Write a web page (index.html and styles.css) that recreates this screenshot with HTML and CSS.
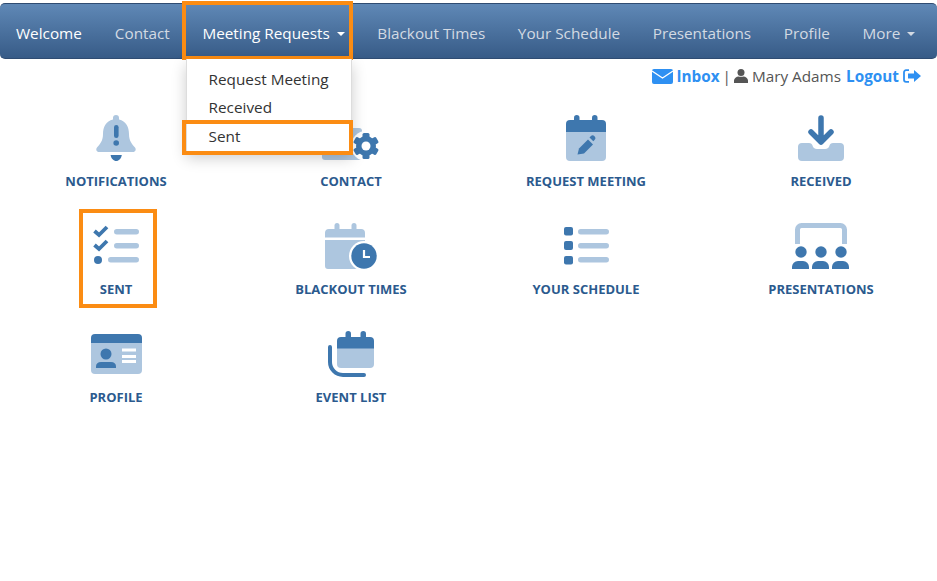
FILE: index.html
```html
<!DOCTYPE html>
<html lang="en">
<head>
<meta charset="utf-8">
<title>Meeting Requests</title>
<link rel="stylesheet" href="styles.css">
</head>
<body>
<nav class="navbar">
  <a class="nav-item active" href="#">Welcome</a>
  <a class="nav-item" href="#">Contact</a>
  <div class="nav-item active open">
    <span>Meeting Requests</span><span class="caret"></span>
    <ul class="dropdown">
      <li>Request Meeting</li>
      <li>Received</li>
      <li class="marked">Sent</li>
    </ul>
  </div>
  <a class="nav-item" href="#">Blackout Times</a>
  <a class="nav-item" href="#">Your Schedule</a>
  <a class="nav-item" href="#">Presentations</a>
  <a class="nav-item" href="#">Profile</a>
  <div class="nav-item"><span>More</span><span class="caret"></span></div>
</nav>

<div class="userbar">
  <svg class="ic-mail" viewBox="0 0 21 15"><rect width="21" height="15" rx="2" fill="#2e90f2"/><path d="M0 2 L10.500 9 L21 2" fill="none" stroke="#fff" stroke-width="1.300"/></svg>
  <a class="link" href="#">Inbox</a>
  <span class="sep">|</span>
  <svg class="ic-user" viewBox="0 0 14 14"><circle cx="7" cy="3.600" r="3.500" fill="#555"/><path d="M0 14v-2.500C0 9 2.500 7.600 4.500 7.400 5.500 8 8.500 8 9.500 7.400 11.500 7.600 14 9 14 11.500V14z" fill="#555"/></svg>
  <span class="name">Mary Adams</span>
  <a class="link" href="#">Logout</a>
  <svg class="ic-logout" viewBox="0 0 18 14"><path d="M6 1.200H3A2 2 0 0 0 1 3.200v7.600a2 2 0 0 0 2 2h3" fill="none" stroke="#2e90f2" stroke-width="1.800"/><path d="M5 4.500h6V1l7 6-7 6V9.500H5z" fill="#2e90f2"/></svg>
</div>

<main class="grid">
  <a class="tile" href="#">
    <svg class="icon" viewBox="0 0 60 50"><path class="lt" d="M30 3a3 3 0 0 1 3 3v1.500C40 9 43 15 43 22c0 7 3 10 6 13.500 1.500 2 .5 4.500-2 4.500H13c-2.500 0-3.500-2.500-2-4.500C14 32 17 29 17 22 17 15 20 9 27 7.500V6a3 3 0 0 1 3-3z"/><rect class="dk" x="28" y="13" width="4.600" height="13" rx="2.300"/><circle class="dk" cx="30.200" cy="31" r="2.800"/><path class="dk" d="M24.600 43h11.200c-.5 3.500-3 6-5.600 6s-5.100-2.500-5.600-6z"/></svg>
    <span class="label">NOTIFICATIONS</span>
  </a>
  <a class="tile" href="#">
    <svg class="icon" viewBox="0 0 60 50"><rect class="lt" x="1" y="16" width="40" height="32" rx="3"/><circle class="wt" cx="45" cy="34" r="15"/><g class="dk"><rect x="41.500" y="21" width="7" height="26" rx="1.500"/><rect x="41.500" y="21" width="7" height="26" rx="1.500" transform="rotate(60 45 34)"/><rect x="41.500" y="21" width="7" height="26" rx="1.500" transform="rotate(120 45 34)"/><circle cx="45" cy="34" r="10"/></g><circle class="wt" cx="45" cy="34" r="4.500"/></svg>
    <span class="label">CONTACT</span>
  </a>
  <a class="tile" href="#">
    <svg class="icon" viewBox="0 0 60 50"><rect class="dk" x="18" y="3" width="5.500" height="10" rx="2.750"/><rect class="dk" x="36" y="3" width="5.500" height="10" rx="2.750"/><path class="lt" d="M10 20h40v25a4 4 0 0 1-4 4H14a4 4 0 0 1-4-4z"/><path class="dk" d="M14 8h32a4 4 0 0 1 4 4v8H10V12a4 4 0 0 1 4-4z"/><path class="dk" d="M21.500 42.500l1.500-6 9-9 5 5-9 9z"/><path class="dk" d="M33.500 25.500l1.200-1.200a2.500 2.500 0 0 1 3.800 3.800l-1.200 1.200z"/></svg>
    <span class="label">REQUEST MEETING</span>
  </a>
  <a class="tile" href="#">
    <svg class="icon" viewBox="0 0 60 50"><path class="lt" d="M11 31h7c2 0 3 1 3.500 2.500 .5 2 2 3.500 4.500 3.500h8c2.500 0 4-1.500 4.500-3.500 .5-1.500 1.500-2.500 3.500-2.500h7a4 4 0 0 1 4 4v10a4 4 0 0 1-4 4H11a4 4 0 0 1-4-4V35a4 4 0 0 1 4-4z"/><path d="M30 6V30M20 20l10 10 10-10" fill="none" stroke="#3e77ae" stroke-width="5.500" stroke-linecap="round" stroke-linejoin="round"/></svg>
    <span class="label">RECEIVED</span>
  </a>

  <a class="tile tile-marked" href="#">
    <svg class="icon" viewBox="0 0 60 50"><path d="M8.500 11l4.500 4 8-8M8.500 25l4.500 4 8-8" fill="none" stroke="#3e77ae" stroke-width="3.800"/><circle class="dk" cx="12" cy="40" r="4"/><rect class="lt" x="28" y="9" width="25" height="5.500" rx="2.750"/><rect class="lt" x="28" y="23" width="25" height="5.500" rx="2.750"/><rect class="lt" x="22" y="37" width="31" height="5.500" rx="2.750"/></svg>
    <span class="label">SENT</span>
  </a>
  <a class="tile" href="#">
    <svg class="icon" viewBox="0 0 60 50"><rect class="lt" x="13.500" y="3" width="5" height="10" rx="2.500"/><rect class="lt" x="30.500" y="3" width="5" height="10" rx="2.500"/><path class="lt" d="M4 17.500V13a4 4 0 0 1 4-4h32a4 4 0 0 1 4 4v4.500zM4 20h40v26a3 3 0 0 1-3 3H7a3 3 0 0 1-3-3z"/><circle class="wt" cx="43" cy="36" r="15"/><circle class="dk" cx="43" cy="36" r="12.700"/><path d="M43 30v7h6" fill="none" stroke="#fff" stroke-width="2.200"/></svg>
    <span class="label">BLACKOUT TIMES</span>
  </a>
  <a class="tile" href="#">
    <svg class="icon" viewBox="0 0 60 50"><rect class="dk" x="8" y="7" width="9" height="8.500" rx="2"/><rect class="dk" x="8" y="21" width="9" height="9" rx="2"/><rect class="dk" x="8" y="36" width="9" height="8.500" rx="2"/><rect class="lt" x="22" y="9" width="31" height="5.500" rx="2.750"/><rect class="lt" x="22" y="23" width="31" height="5.500" rx="2.750"/><rect class="lt" x="22" y="37" width="31" height="5.500" rx="2.750"/></svg>
    <span class="label">YOUR SCHEDULE</span>
  </a>
  <a class="tile" href="#">
    <svg class="icon" viewBox="0 0 60 50"><path d="M6.500 24V9.500a4 4 0 0 1 4-4h39a4 4 0 0 1 4 4V24" fill="none" stroke="#adc6df" stroke-width="5"/><g class="dk"><circle cx="10" cy="32" r="5.700"/><circle cx="30" cy="32" r="5.700"/><circle cx="50" cy="32" r="5.700"/><path d="M1 49v-2a6 6 0 0 1 6-6h5a6 6 0 0 1 6 6v2zM21 49v-2a6 6 0 0 1 6-6h5a6 6 0 0 1 6 6v2zM41 49v-2a6 6 0 0 1 6-6h5a6 6 0 0 1 6 6v2z"/></g></svg>
    <span class="label">PRESENTATIONS</span>
  </a>

  <a class="tile" href="#">
    <svg class="icon" viewBox="0 0 60 50"><path class="lt" d="M5 15h51v27a4 4 0 0 1-4 4H9a4 4 0 0 1-4-4z"/><path class="dk" d="M9 6h43a4 4 0 0 1 4 4v5H5v-5a4 4 0 0 1 4-4z"/><circle class="dk" cx="20" cy="26" r="5.500"/><path class="dk" d="M10 40v-1.500c0-3 2-4.500 5-4.500h10c3 0 5 1.500 5 4.500V40z"/><path d="M36 22h14M36 28.500h14M36 33.500h14" stroke="#fff" stroke-width="3" fill="none"/></svg>
    <span class="label">PROFILE</span>
  </a>
  <a class="tile" href="#">
    <svg class="icon" viewBox="0 0 60 50"><rect class="dk" x="24.500" y="3" width="5.500" height="10" rx="2.750"/><rect class="dk" x="39.500" y="3" width="5.500" height="10" rx="2.750"/><path class="lt" d="M16 20h37v16a4 4 0 0 1-4 4H20a4 4 0 0 1-4-4z"/><path class="dk" d="M20 9h29a4 4 0 0 1 4 4v7.500H16V13a4 4 0 0 1 4-4z"/><path d="M9 19v15a13 13 0 0 0 13 13h21" fill="none" stroke="#3e77ae" stroke-width="4" stroke-linecap="round"/></svg>
    <span class="label">EVENT LIST</span>
  </a>
</main>
</body>
</html>
```

FILE: styles.css
```css
*, *::before, *::after { box-sizing: border-box; }

html, body {
  margin: 0;
  height: 581px;
  overflow: hidden;
  background: #fff;
  font-family: "Open Sans", sans-serif;
  color: #333;
}

a { color: inherit; text-decoration: none; }

.navbar {
  display: flex;
  align-items: stretch;
  height: 56px;
  margin-top: 3px;
  background: linear-gradient(to bottom, #5f88b6, #375b87);
  border: 1px solid #2f4c72;
  border-width: 1px 0;
  border-radius: 5px;
  font-size: 15.3px;
}

.nav-item {
  position: relative;
  display: flex;
  align-items: center;
  padding: 3px 16.3px 0;
  color: #d3dae3;
}
.nav-item:first-child { padding-left: 16px; padding-right: 16.7px; }
.nav-item.active { color: #fff; }

.nav-item.open::after {
  content: "";
  position: absolute;
  left: -4px;
  top: -3px;
  bottom: -1.5px;
  width: 171px;
  border: 4.5px solid #fb8c13;
  pointer-events: none;
}

.caret {
  width: 0;
  height: 0;
  margin-left: 7px;
  margin-top: 2px;
  border-top: 4px solid currentColor;
  border-left: 4px solid transparent;
  border-right: 4px solid transparent;
}

.dropdown {
  position: absolute;
  top: 55px;
  left: 0;
  width: 165.5px;
  margin: 0;
  padding: 6px 0 1px;
  list-style: none;
  background: #fff;
  border: 1px solid #ddd;
  border-top: 0;
  box-shadow: 0 6px 14px rgba(0, 0, 0, .2);
  color: #333;
  z-index: 5;
}
.dropdown li {
  position: relative;
  height: 28px;
  line-height: 28px;
  padding-left: 21.5px;
}
.dropdown .marked { margin-top: 1px; }
.dropdown .marked::after {
  content: "";
  position: absolute;
  left: -5px;
  top: -2.5px;
  width: 171px;
  height: 35.5px;
  border: 4.5px solid #fb8c13;
}

.userbar {
  display: flex;
  justify-content: flex-end;
  align-items: center;
  height: 34px;
  padding-right: 16px;
  font-size: 15.3px;
  color: #555;
}
.link { font-weight: 700; color: #2e90f2; }
.ic-mail { width: 21px; height: 15px; margin-right: 3px; }
.sep { margin: 0 3px; }
.ic-user { width: 14px; height: 14px; margin-right: 4px; }
.name { margin-right: 5px; }
.ic-logout { width: 18px; height: 14px; margin-left: 4px; }

.grid {
  display: grid;
  grid-template-columns: repeat(4, 235px);
  grid-auto-rows: 108px;
  margin-left: -1.5px;
  margin-top: 19px;
}

.tile {
  position: relative;
  display: flex;
  flex-direction: column;
  align-items: center;
}
.icon { display: block; width: 60px; height: 50px; }
.label {
  margin-top: 11px;
  font-size: 13px;
  line-height: 16px;
  font-weight: 700;
  color: #2b5a8e;
}
.tile-marked::after {
  content: "";
  position: absolute;
  left: 80.5px;
  top: -11px;
  width: 78px;
  height: 99px;
  border: 4.7px solid #fb8c13;
}

.lt { fill: #adc6df; }
.dk { fill: #3e77ae; }
.wt { fill: #fff; }
```
